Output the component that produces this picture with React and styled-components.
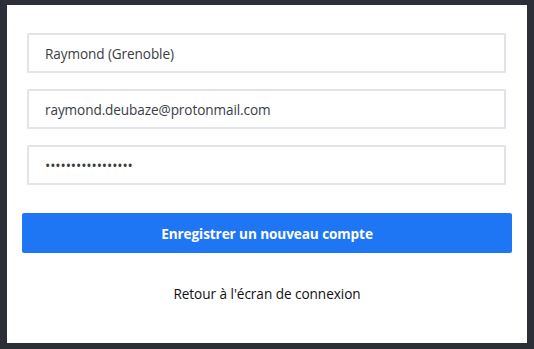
import React, { useState } from 'react'
import styled, { createGlobalStyle } from 'styled-components'

const Global = createGlobalStyle`
  html, body {
    margin: 0;
    padding: 0;
    background: #2c2f37;
  }
  * { box-sizing: border-box; }
`

const Page = styled.div`
  width: 534px;
  height: 349px;
  padding: 5px 7px 6px 7px;
  background: #2c2f37;
  font-family: "Open Sans", "Noto Sans", sans-serif;
`

const Card = styled.form`
  width: 520px;
  height: 338px;
  background: #ffffff;
  padding: 28px 15px 0 15px;
  display: flex;
  flex-direction: column;
`

const Fields = styled.div`
  display: flex;
  flex-direction: column;
  gap: 16px;
  padding: 0 6px 0 5px;
`

const Input = styled.input`
  height: 40px;
  width: 100%;
  border: 2px solid #e1e4e8;
  border-radius: 1px;
  padding: 0 16px;
  font-family: inherit;
  font-size: ${p => (p.type === 'password' ? '14px' : '13.6px')};
  color: #3a3d44;
  background: #fff;
  outline: none;
  letter-spacing: -0.1px;
`

const Submit = styled.button`
  margin-top: 28px;
  height: 40px;
  width: 100%;
  border: none;
  border-radius: 2px;
  background: #1f76f5;
  color: #fff;
  font-family: inherit;
  font-weight: 700;
  font-size: 13.6px;
  letter-spacing: -0.1px;
  cursor: pointer;
`

const Back = styled.a`
  margin-top: 31px;
  align-self: center;
  font-size: 13.6px;
  letter-spacing: -0.05px;
  color: #111;
  text-decoration: none;
  cursor: pointer;
`

const App = () => {
  const [name, setName] = useState('Raymond (Grenoble)')
  const [mail, setMail] = useState('raymond.deubaze@protonmail.com')
  const [pass, setPass] = useState('azertyuiopqsdfghj')

  return (
    <Page>
      <Global />
      <Card onSubmit={e => e.preventDefault()}>
        <Fields>
          <Input value={name} onChange={e => setName(e.target.value)} />
          <Input value={mail} onChange={e => setMail(e.target.value)} />
          <Input type="password" value={pass} onChange={e => setPass(e.target.value)} />
        </Fields>
        <Submit type="submit">Enregistrer un nouveau compte</Submit>
        <Back>Retour à l'écran de connexion</Back>
      </Card>
    </Page>
  )
}

export default App
